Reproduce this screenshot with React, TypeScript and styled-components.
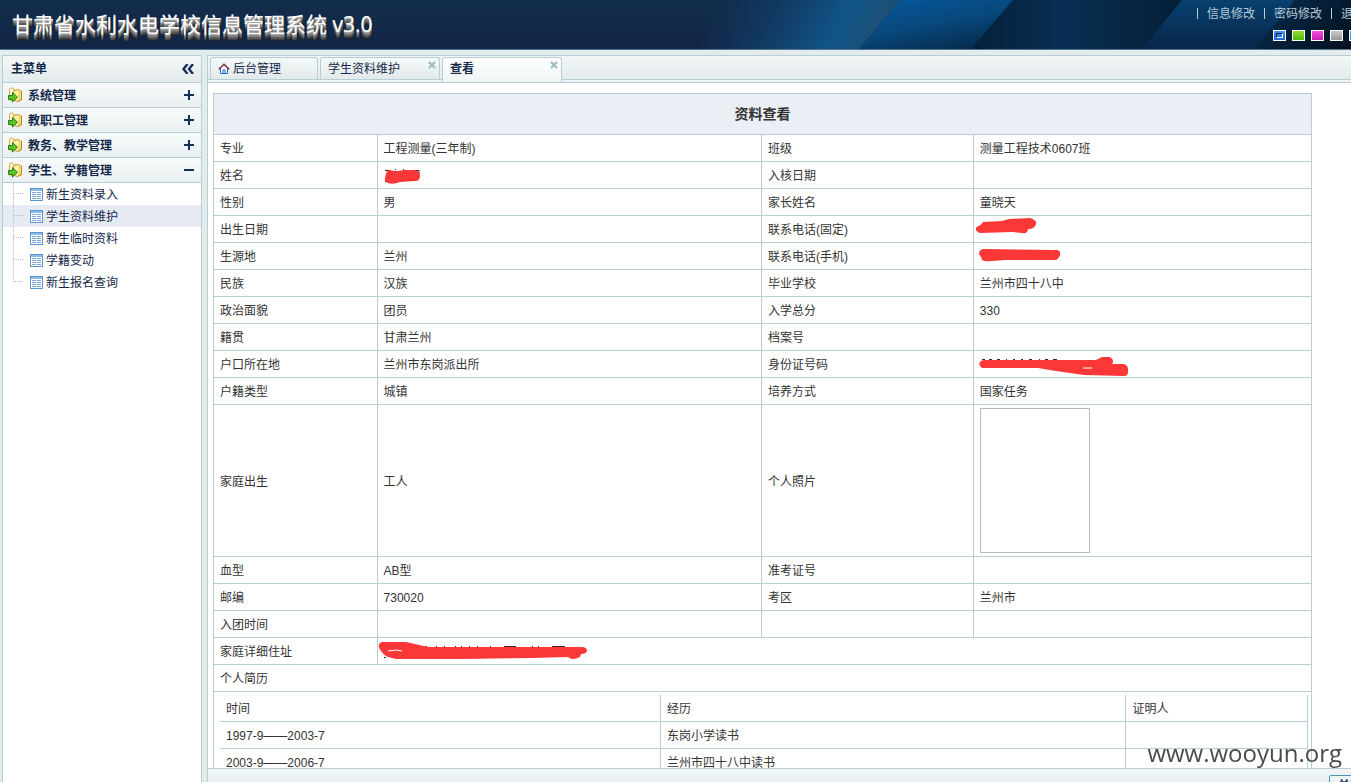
import React from "react";
import styled, { createGlobalStyle } from "styled-components";

const LINE = "#b7ced5";
const NAVY = "#15284b";

const GlobalStyle = createGlobalStyle`
  * { box-sizing: border-box; }
  body {
    margin: 0;
    overflow: hidden;
    background: #e3ecec;
    color: #333;
    font: 12px/18px "Liberation Sans", "Noto Sans CJK SC", sans-serif;
  }
  button { font: inherit; color: inherit; margin: 0; padding: 0; border: 0; background: none; cursor: pointer; }
  a { color: inherit; text-decoration: none; }
  ul { list-style: none; margin: 0; padding: 0; }
`;

const Shell = styled.div`
  display: flex;
  flex-direction: column;
  width: calc(100% + 24px);
  height: 100vh;
`;

const Header = styled.header`
  position: relative;
  flex: none;
  display: flex;
  justify-content: space-between;
  height: 50px;
  border-bottom: 1px solid #52748c;
  background: linear-gradient(#122e4b, #122546);
  overflow: hidden;
`;

const Backdrop = styled.svg`
  position: absolute;
  top: 0;
  right: 0;
  width: 675px;
  height: 49px;
`;

const Title = styled.h1`
  position: relative;
  margin: 0;
  padding: 8px 12px;
  color: #fff;
  font: 21px/32px "Open Sans", "Noto Sans CJK SC", sans-serif;
  text-shadow: 0 1px 0 #a8a8a8, 0 2px 0 #8c8c8c, 0 3px 0 #787878, 0 4px 0 #646464,
    0 5px 0 #505050, 0 6px 0 #404040, 0 7px 2px #222;
`;

const HeaderTools = styled.div`
  position: relative;
  display: flex;
  flex-direction: column;
  align-items: flex-end;
  gap: 7px;
  padding: 4px 10px 0 0;
`;

const TopNav = styled.nav`
  display: flex;
  align-items: center;
  gap: 9px;
  height: 19px;
  color: #b4cbd8;
`;

const Divider = styled.span`
  width: 1px;
  height: 11px;
  background: #b4cbd8;
`;

const Swatches = styled.div`
  display: flex;
  gap: 6px;
  padding-right: 3px;
`;

const Swatch = styled.button<{ $from: string; $to: string }>`
  display: flex;
  align-items: center;
  justify-content: center;
  width: 13px;
  height: 11px;
  border: 1px solid #fff;
  background: linear-gradient(${(p) => p.$from}, ${(p) => p.$to});
`;

const SwatchMark = styled.span`
  width: 7px;
  height: 5px;
  border: 1px solid;
  border-color: #222 #fff #fff #222;
`;

const Body = styled.div`
  flex: 1;
  min-height: 0;
  display: flex;
  gap: 5px;
  padding: 5px 0 0 2px;
`;

const Sidebar = styled.aside`
  flex: none;
  width: 200px;
  border: 1px solid ${LINE};
  border-bottom: 0;
  background: #fff;
  color: ${NAVY};
`;

const SidebarHead = styled.div`
  display: flex;
  align-items: center;
  justify-content: space-between;
  height: 27px;
  padding: 0 7px 0 8px;
  border-bottom: 1px solid ${LINE};
  background: linear-gradient(#f4f8f8, #e3eaeb);
  font-weight: bold;
`;

const IconButton = styled.button`
  display: flex;
`;

const Group = styled.button`
  display: flex;
  align-items: center;
  width: 100%;
  height: 25px;
  padding: 0 7px 0 5px;
  gap: 5px;
  border-bottom: 1px solid ${LINE};
  background: linear-gradient(#f7fafa, #e9f0f1);
  font-weight: bold;
  text-align: left;
`;

const GroupLabel = styled.span`
  flex: 1;
  padding-top: 2px;
`;

const Item = styled.li<{ $active?: boolean }>`
  height: 22px;
  background: ${(p) => (p.$active ? "#e6ebf3" : "transparent")};
`;

const ItemLink = styled.a`
  display: flex;
  align-items: center;
  height: 22px;
  padding-left: 10px;
`;

const Branch = styled.svg`
  width: 17px;
  height: 22px;
`;

const ItemLabel = styled.span`
  padding: 2px 0 0 3px;
`;

const Main = styled.main`
  flex: 1;
  min-width: 0;
  display: flex;
  flex-direction: column;
  border: 1px solid ${LINE};
  border-bottom: 0;
  background: #fff;
`;

const TabBar = styled.div`
  flex: none;
  height: 27px;
  border-bottom: 1px solid ${LINE};
  background: #eef4f5;
`;

const TabStrip = styled.div`
  display: flex;
  gap: 2px;
  height: 24px;
  padding: 1px 0 0 2px;
  border-bottom: 1px solid ${LINE};
  background: linear-gradient(#f1f6f7, #e5ecec);
`;

const Tab = styled.div<{ $active?: boolean; $width: number }>`
  position: relative;
  width: ${(p) => p.$width}px;
  height: ${(p) => (p.$active ? 25 : 22)}px;
  border: 1px solid ${LINE};
  border-bottom: 0;
  border-radius: 3px 3px 0 0;
  background: ${(p) => (p.$active ? "linear-gradient(#fff, #eef4f5)" : "linear-gradient(#f5f9f9, #e2e9ea)")};
  color: ${NAVY};
  font-weight: ${(p) => (p.$active ? "bold" : "normal")};
`;

const TabLabel = styled.button`
  display: flex;
  align-items: center;
  gap: 3px;
  width: 100%;
  height: 22px;
  padding-left: 7px;
`;

const TabClose = styled.button`
  position: absolute;
  top: 3px;
  right: 3px;
  display: flex;
`;

const Content = styled.div`
  flex: 1;
  min-height: 0;
  overflow-y: auto;
  scrollbar-width: none;
  padding: 10px 62px 0 5px;
`;

const Sheet = styled.table`
  width: 100%;
  table-layout: fixed;
  border-collapse: collapse;
  tr { height: 27px; }
`;

const Col = styled.col<{ $w?: string }>`
  width: ${(p) => p.$w ?? "auto"};
`;

const SheetTitle = styled.th`
  height: 41px;
  border: 1px solid ${LINE};
  background: #ebeff5;
  font-size: 14px;
  padding: 0;
`;

const Cell = styled.td`
  position: relative;
  padding: 4px 6px 2px;
  border: 1px solid ${LINE};
  line-height: 18px;
`;

const NestedCell = styled(Cell)`
  padding: 3px 3px 3px 6px;
`;

const PhotoCell = styled(Cell)`
  padding: 3px 6px;
`;

const Nested = styled(Sheet)`
  thead tr { height: 26px; }
  td, th {
    padding: 4px 6px 2px;
    border: 0 solid ${LINE};
    border-width: 0 1px 1px 0;
    font-weight: normal;
    text-align: left;
  }
`;

const Photo = styled.div`
  width: 110px;
  height: 145px;
  border: 1px solid #bbb;
`;

const Ink = styled.svg`
  position: absolute;
  left: 0;
  top: 0;
  width: 220px;
  height: 27px;
  overflow: visible;
`;

const Footer = styled.footer`
  flex: none;
  display: flex;
  justify-content: flex-end;
  height: 14px;
  padding: 6px 3px 0 0;
  border-top: 1px solid ${LINE};
  background: linear-gradient(#f1f5f7, #e9eff1);
  overflow: hidden;
`;

const FooterButton = styled.button`
  width: 42px;
  height: 22px;
  border: 1px solid #4f93b5;
  border-radius: 2px;
  background: #eef5f8;
  color: ${NAVY};
  font-weight: bold;
  line-height: 14px;
`;

const Watermark = styled.div`
  position: fixed;
  right: 9px;
  bottom: 12px;
  color: #4a4a4a;
  font: 24px/34px "Open Sans", sans-serif;
`;

const FolderIcon = () => (
  <svg width="15" height="16" viewBox="0 0 15 16">
    <path d="M1.5 13V2.5L2.5 1H4.5L6 3H9.5V13Z" fill="#fffbe0" stroke="#d9a531" />
    <path d="M5.5 4L10 2.5L13.5 4V12.5L9.5 14.5L5.5 13Z" fill="#fff2a6" stroke="#d9a531" />
    <path d="M11.5 4V13" stroke="#f3d468" strokeWidth="2" />
    <path d="M13.5 4V12.5L9.5 14.5" fill="none" stroke="#b9821a" />
    <path d="M.5 8.5H4.5V5.5L9.5 10.2L4.5 15V12.5H.5Z" fill="#5fc42a" stroke="#23801a" />
  </svg>
);

const GridIcon = () => (
  <svg width="13" height="13" viewBox="0 0 13 13" shapeRendering="crispEdges">
    <rect x=".5" y=".5" width="12" height="12" fill="#fff" stroke="#5b93d3" />
    <path d="M1 1.5H12M1 2.5H12" stroke="#8ebbe8" />
    <path d="M2 4.5H6M7 4.5H11M2 6.5H6M7 6.5H11M2 8.5H6M7 8.5H11M2 10.5H6M7 10.5H11" stroke="#79a4d8" />
  </svg>
);

const HomeIcon = () => (
  <svg width="12" height="12" viewBox="0 0 12 12">
    <path d="M2.5 5.5V10.5H9.5V5.5L6 2Z" fill="#fff" />
    <path d="M2.5 5V10.5H9.5V5M5 10.5V7H7V10.5" fill="none" stroke="#2465c4" />
    <path d="M.8 6.3L6 1.2L11.2 6.3" fill="none" stroke="#782c34" strokeWidth="1.4" />
  </svg>
);

const CloseIcon = () => (
  <svg width="8" height="8" viewBox="0 0 8 8">
    <path d="M1 1L7 7M7 1L1 7" stroke="#9dbbc4" strokeWidth="2.2" />
  </svg>
);

const Toggle = ({ open }: { open?: boolean }) => (
  <svg width="10" height="10" viewBox="0 0 10 10">
    <path d={open ? "M0 5H10" : "M0 5H10M5 0V10"} stroke="#153058" strokeWidth="2" />
  </svg>
);

const CollapseIcon = () => (
  <svg width="12" height="10" viewBox="0 0 12 10">
    <path d="M5.5 0L1.5 5L5.5 10M11 0L7 5L11 10" fill="none" stroke="#153058" strokeWidth="2.4" />
  </svg>
);

const Slants = () => (
  <Backdrop viewBox="0 0 675 49" preserveAspectRatio="none" aria-hidden="true">
    <defs>
      <linearGradient id="glow" x1="0" x2="1" y1="0" y2="0.12">
        <stop offset="0.1" stopColor="#103864" stopOpacity="0" />
        <stop offset="0.4" stopColor="#113961" />
        <stop offset="0.75" stopColor="#115488" />
        <stop offset="1" stopColor="#204f73" />
      </linearGradient>
      <linearGradient id="blue" x1="0.2" x2="0.8" y1="0" y2="1">
        <stop offset="0" stopColor="#07569a" />
        <stop offset="0.5" stopColor="#08477a" />
        <stop offset="1" stopColor="#06294b" />
      </linearGradient>
      <linearGradient id="dark" x1="0" x2="1" y1="0" y2="0">
        <stop offset="0" stopColor="#06203a" />
        <stop offset="0.45" stopColor="#082f53" />
        <stop offset="1" stopColor="#061e36" />
      </linearGradient>
      <linearGradient id="deep" x1="0" x2="0" y1="0" y2="1">
        <stop offset="0" stopColor="#08416f" />
        <stop offset="1" stopColor="#08264a" />
      </linearGradient>
      <linearGradient id="edge" x1="0" x2="1" y1="0" y2="0.4">
        <stop offset="0" stopColor="#082f52" />
        <stop offset="1" stopColor="#03111f" />
      </linearGradient>
    </defs>
    <path d="M20 0H200L159 49H0Z" fill="url(#glow)" />
    <path d="M200 0H313L271 49H159Z" fill="url(#blue)" />
    <path d="M313 0H482L442 49H271Z" fill="url(#dark)" />
    <path d="M482 0H595L554 49H442Z" fill="url(#deep)" />
    <path d="M595 0H675V49H554Z" fill="url(#edge)" />
  </Backdrop>
);

type Stroke = { shape: string; ticks?: string; gaps?: string };

const strokes: Record<string, Stroke> = {
  name: {
    ticks: "M7 8.5H11M7 19.5H9M17 7.5H18M25 7.5H26M32 8.5H41V12",
    shape: "M8 12Q8 9 12 8Q18 10 26 8L36 8Q42 9 42 14Q42 19 37 19L22 20Q15 23 10 21Q6 19 7 16Z",
  },
  phone: {
    shape: "M5 10Q8 8 9 6L28 5L35 3L56 2Q63 4 62 8Q61 13 54 13Q54 18 48 17L38 16L6 17Q1 15 2 12Q3 10 5 10Z",
  },
  mobile: {
    shape: "M9 6Q5 7 5 11Q7 13 8 17Q11 19 18 18L31 17L82 17Q87 14 86 9Q84 6 80 7L9 6Z",
  },
  idcard: {
    ticks: "M8 8.5H11M15 8.5H18M23 8.5H26M32 8.5H33M39 8.5H41M47 8.5H49M55 8.5H58M65 8.5H66M71 8.5H74M79 8.5H83",
    gaps: "M109 17H118",
    shape: "M10 9L90 9L122 9L128 6L136 6Q141 9 138 13L150 13Q155 15 154 21Q154 25 150 25L110 24L82 20L64 17L8 17Q4 14 6 11Q8 9 10 9Z",
  },
  address: {
    ticks:
      "M47 8.5H49M58 8.5H59M66 8.5H67M77 8.5H78M83 8.5H84M91 8.5H92M99 8.5H100M112 8.5H113M126 8.5H138M154 8.5H155M160 8.5H161M174 8.5H187M6 19.5H8",
    gaps: "M10 13L19 12L24 13",
    shape: "M4 4Q0 5 1 10Q5 17 10 19L18 21L84 21L154 20L190 19Q194 23 202 19L203 16Q209 16 209 12Q208 9 204 9L50 9L37 6L28 4Z",
  },
};

const Scribble = ({ id }: { id: string }) => {
  const s = strokes[id];
  return (
    <Ink viewBox="0 0 220 27" role="img" aria-label="已遮盖">
      {s.ticks && <path d={s.ticks} stroke="#502226" strokeWidth="1" fill="none" />}
      <path d={s.shape} fill="#fb3837" />
      {s.gaps && <path d={s.gaps} stroke="#fff" strokeWidth="1" fill="none" />}
    </Ink>
  );
};

const rows: [string, React.ReactNode, string, React.ReactNode][] = [
  ["专业", "工程测量(三年制)", "班级", "测量工程技术0607班"],
  ["姓名", <Scribble id="name" />, "入核日期", ""],
  ["性别", "男", "家长姓名", "童晓天"],
  ["出生日期", "", "联系电话(固定)", <Scribble id="phone" />],
  ["生源地", "兰州", "联系电话(手机)", <Scribble id="mobile" />],
  ["民族", "汉族", "毕业学校", "兰州市四十八中"],
  ["政治面貌", "团员", "入学总分", "330"],
  ["籍贯", "甘肃兰州", "档案号", ""],
  ["户口所在地", "兰州市东岗派出所", "身份证号码", <Scribble id="idcard" />],
  ["户籍类型", "城镇", "培养方式", "国家任务"],
  ["家庭出生", "工人", "个人照片", <Photo role="img" aria-label="个人照片" />],
  ["血型", "AB型", "准考证号", ""],
  ["邮编", "730020", "考区", "兰州市"],
  ["入团时间", "", "", ""],
];

const groups = ["系统管理", "教职工管理", "教务、教学管理", "学生、学籍管理"];
const items = ["新生资料录入", "学生资料维护", "新生临时资料", "学籍变动", "新生报名查询"];
const navLinks = ["信息修改", "密码修改", "退出"];
const themes = [
  ["蓝色", "#3f95f5", "#1765d8"],
  ["绿色", "#93e02c", "#4fb80e"],
  ["粉色", "#f04fdc", "#c81fb4"],
  ["灰色", "#c9c9c9", "#999999"],
  ["青色", "#4fc4f5", "#1797d8"],
];
const history = [
  ["1997-9——2003-7", "东岗小学读书", ""],
  ["2003-9——2006-7", "兰州市四十八中读书", ""],
];

export default function App() {
  return (
    <>
      <GlobalStyle />
      <Shell>
        <Header>
          <Slants />
          <Title>甘肃省水利水电学校信息管理系统 v3.0</Title>
          <HeaderTools>
            <TopNav>
              {navLinks.map((label) => (
                <React.Fragment key={label}>
                  <Divider />
                  <a href="#">{label}</a>
                </React.Fragment>
              ))}
            </TopNav>
            <Swatches>
              {themes.map(([label, from, to], i) => (
                <Swatch key={label} $from={from} $to={to} aria-label={label}>
                  {i === 0 && <SwatchMark />}
                </Swatch>
              ))}
            </Swatches>
          </HeaderTools>
        </Header>
        <Body>
          <Sidebar>
            <SidebarHead>
              主菜单
              <IconButton aria-label="收起菜单">
                <CollapseIcon />
              </IconButton>
            </SidebarHead>
            {groups.map((label, i) => (
              <Group key={label} aria-expanded={i === 3}>
                <FolderIcon />
                <GroupLabel>{label}</GroupLabel>
                <Toggle open={i === 3} />
              </Group>
            ))}
            <ul>
              {items.map((label, i) => (
                <Item key={label} $active={i === 1}>
                  <ItemLink href="#">
                    <Branch viewBox="0 0 17 22" shapeRendering="crispEdges" aria-hidden="true">
                      <path
                        d={i === items.length - 1 ? "M.5 0V10.5H10" : "M.5 0V22M.5 10.5H11"}
                        fill="none"
                        stroke="#bbb"
                        strokeDasharray="1 1"
                      />
                    </Branch>
                    <GridIcon />
                    <ItemLabel>{label}</ItemLabel>
                  </ItemLink>
                </Item>
              ))}
            </ul>
          </Sidebar>
          <Main>
            <TabBar>
              <TabStrip>
                <Tab $width={108}>
                  <TabLabel>
                    <HomeIcon />
                    后台管理
                  </TabLabel>
                </Tab>
                <Tab $width={120}>
                  <TabLabel>学生资料维护</TabLabel>
                  <TabClose aria-label="关闭学生资料维护">
                    <CloseIcon />
                  </TabClose>
                </Tab>
                <Tab $width={120} $active>
                  <TabLabel>查看</TabLabel>
                  <TabClose aria-label="关闭查看">
                    <CloseIcon />
                  </TabClose>
                </Tab>
              </TabStrip>
            </TabBar>
            <Content>
              <Sheet>
                <colgroup>
                  <Col $w="14.9%" />
                  <Col $w="35%" />
                  <Col $w="19.3%" />
                  <Col />
                </colgroup>
                <thead>
                  <tr>
                    <SheetTitle colSpan={4}>资料查看</SheetTitle>
                  </tr>
                </thead>
                <tbody>
                  {rows.map(([a, b, c, d]) => {
                    const Last = c === "个人照片" ? PhotoCell : Cell;
                    return (
                      <tr key={a}>
                        <Cell>{a}</Cell>
                        <Cell>{b}</Cell>
                        <Cell>{c}</Cell>
                        <Last>{d}</Last>
                      </tr>
                    );
                  })}
                  <tr>
                    <Cell>家庭详细住址</Cell>
                    <Cell colSpan={3}>
                      <Scribble id="address" />
                    </Cell>
                  </tr>
                  <tr>
                    <Cell colSpan={4}>个人简历</Cell>
                  </tr>
                  <tr>
                    <NestedCell colSpan={4}>
                      <Nested>
                        <colgroup>
                          <Col $w="40.5%" />
                          <Col $w="42.8%" />
                          <Col />
                        </colgroup>
                        <thead>
                          <tr>
                            <th>时间</th>
                            <th>经历</th>
                            <th>证明人</th>
                          </tr>
                        </thead>
                        <tbody>
                          {history.map(([time, what, who]) => (
                            <tr key={time}>
                              <td>{time}</td>
                              <td>{what}</td>
                              <td>{who}</td>
                            </tr>
                          ))}
                        </tbody>
                      </Nested>
                    </NestedCell>
                  </tr>
                </tbody>
              </Sheet>
            </Content>
            <Footer>
              <FooterButton>关闭</FooterButton>
            </Footer>
          </Main>
        </Body>
      </Shell>
      <Watermark>www.wooyun.org</Watermark>
    </>
  );
}
